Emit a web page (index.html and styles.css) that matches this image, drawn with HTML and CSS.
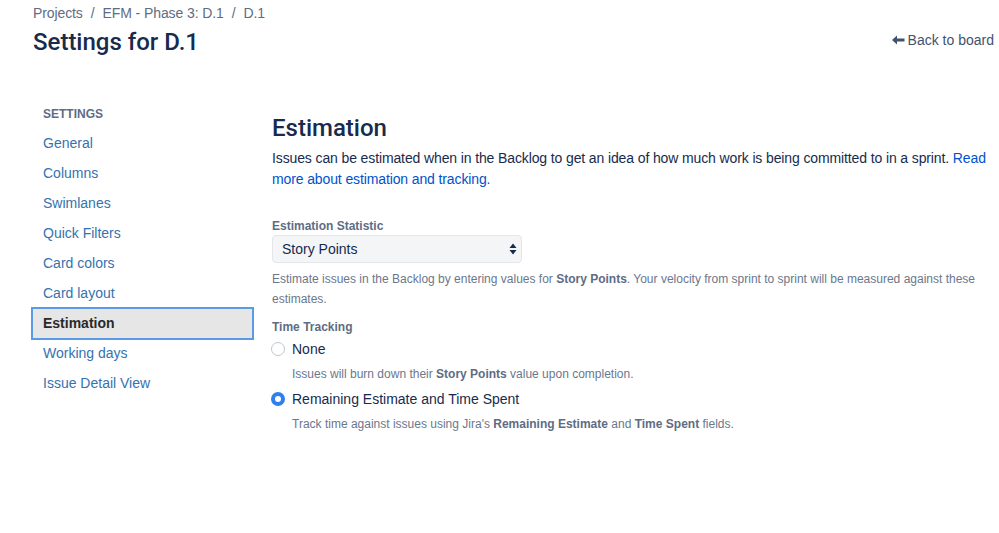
FILE: index.html
```html
<!DOCTYPE html>
<html>
<head>
<meta charset="utf-8">
<link rel="stylesheet" href="styles.css">
</head>
<body>
<header class="header">
  <div class="header-left">
    <nav class="crumbs">
      <span>Projects</span><span class="sep">/</span><span>EFM - Phase 3: D.1</span><span class="sep">/</span><span>D.1</span>
    </nav>
    <h1 class="title">Settings for D.1</h1>
  </div>
  <a class="back">
    <svg class="back-icon" width="13" height="10" viewBox="0 0 13 10"><path d="M0 5 L5 0.5 L5 3.5 L12.5 3.5 L12.5 6.5 L5 6.5 L5 9.5 Z" fill="#42526e"/></svg>Back to board
  </a>
</header>
<div class="main">
  <aside class="sidebar">
    <div class="side-title">SETTINGS</div>
    <ul class="side-list">
      <li class="side-item">General</li>
      <li class="side-item">Columns</li>
      <li class="side-item">Swimlanes</li>
      <li class="side-item">Quick Filters</li>
      <li class="side-item">Card colors</li>
      <li class="side-item">Card layout</li>
      <li class="side-item active">Estimation</li>
      <li class="side-item">Working days</li>
      <li class="side-item">Issue Detail View</li>
    </ul>
  </aside>
  <section class="content">
    <h2 class="heading">Estimation</h2>
    <p class="intro">Issues can be estimated when in the Backlog to get an idea of how much work is being committed to in a sprint. <a class="link">Read more about estimation and tracking.</a></p>
    <div class="field-label first">Estimation Statistic</div>
    <div class="select">
      <span>Story Points</span>
      <svg class="arrows" width="8" height="12" viewBox="0 0 8 12"><path d="M4 0.5 L7.5 5 L0.5 5 Z M4 11.5 L7.5 7 L0.5 7 Z" fill="#172b4d"/></svg>
    </div>
    <p class="help">Estimate issues in the Backlog by entering values for <b>Story Points</b>. Your velocity from sprint to sprint will be measured against these estimates.</p>
    <div class="field-label second">Time Tracking</div>
    <div class="radio-row"><span class="radio"></span><span>None</span></div>
    <p class="radio-desc">Issues will burn down their <b>Story Points</b> value upon completion.</p>
    <div class="radio-row"><span class="radio checked"></span><span>Remaining Estimate and Time Spent</span></div>
    <p class="radio-desc">Track time against issues using Jira's <b>Remaining Estimate</b> and <b>Time Spent</b> fields.</p>
  </section>
</div>
</body>
</html>
```

FILE: styles.css
```css
* { box-sizing: border-box; }
body {
  margin: 0;
  background: #fff;
  font-family: "Liberation Sans", Arial, sans-serif;
  color: #172b4d;
}
.header {
  display: flex;
  justify-content: space-between;
  align-items: flex-start;
  padding: 3px 5px 0 33px;
  height: 56px;
}
.crumbs {
  font-size: 14px;
  line-height: 20px;
  color: #5e6c84;
  letter-spacing: -0.1px;
}
.sep { margin: 0 8px; }
.title {
  margin: 5px 0 0;
  font-family: Roboto, "Liberation Sans", sans-serif;
  font-size: 24px;
  line-height: 28px;
  font-weight: 500;
  color: #172b4d;
}
.back {
  margin-top: 27px;
  font-size: 14px;
  line-height: 20px;
  color: #42526e;
  display: flex;
  align-items: center;
}
.back-icon { margin-right: 3px; }
.main {
  display: flex;
  padding-left: 31px;
}
.sidebar {
  width: 223px;
  padding-top: 48px;
}
.side-title {
  font-size: 12px;
  font-weight: bold;
  line-height: 20px;
  color: #5e6c84;
  padding-left: 12px;
  margin-bottom: 4px;
}
.side-list {
  list-style: none;
  margin: 0;
  padding: 0;
}
.side-item {
  font-size: 14px;
  line-height: 26px;
  padding: 0 10px;
  border: 2px solid transparent;
  color: #3572b0;
}
.side-item.active {
  background: #e6e6e6;
  border-color: #5a9ae6;
  font-weight: bold;
  color: #292929;
  line-height: 29px;
  margin: -1px 0 -2px;
}
.content {
  padding-left: 18px;
  padding-top: 57px;
  width: 745px;
}
.heading {
  margin: 0;
  font-family: Roboto, "Liberation Sans", sans-serif;
  font-size: 24px;
  line-height: 30px;
  font-weight: 500;
  color: #172b4d;
}
.intro {
  margin: 5px 0 0;
  font-size: 14px;
  line-height: 21px;
  letter-spacing: -0.12px;
}
.link { color: #0052cc; }
.field-label {
  font-size: 12px;
  font-weight: bold;
  line-height: 16px;
  color: #5e6c84;
}
.field-label.first { margin-top: 28px; }
.field-label.second { margin-top: 10px; }
.select {
  margin-top: 1px;
  width: 250px;
  height: 28px;
  background: #f4f5f7;
  border: 1px solid #e4e6ea;
  border-radius: 4px;
  display: flex;
  align-items: center;
  justify-content: space-between;
  padding: 0 4px 0 9px;
  font-size: 14px;
  color: #172b4d;
}
.help {
  margin: 6px 0 0;
  font-size: 12px;
  line-height: 20px;
  color: #6b778c;
}
.help b, .radio-desc b { color: #5e6c84; }
.radio-row {
  margin-top: 3px;
  display: flex;
  align-items: center;
  font-size: 14px;
  line-height: 22px;
  color: #172b4d;
}
.radio-desc + .radio-row { margin-top: 4px; }
.radio {
  width: 14px;
  height: 14px;
  border-radius: 50%;
  border: 1px solid #c1c7d0;
  background: #fff;
  margin: 0 7px 0 -1px;
}
.radio.checked {
  border: 4px solid #2f80ed;
  background: #fff;
}
.radio-desc {
  margin: 4px 0 0 20px;
  font-size: 12px;
  line-height: 20px;
  color: #6b778c;
}
```
